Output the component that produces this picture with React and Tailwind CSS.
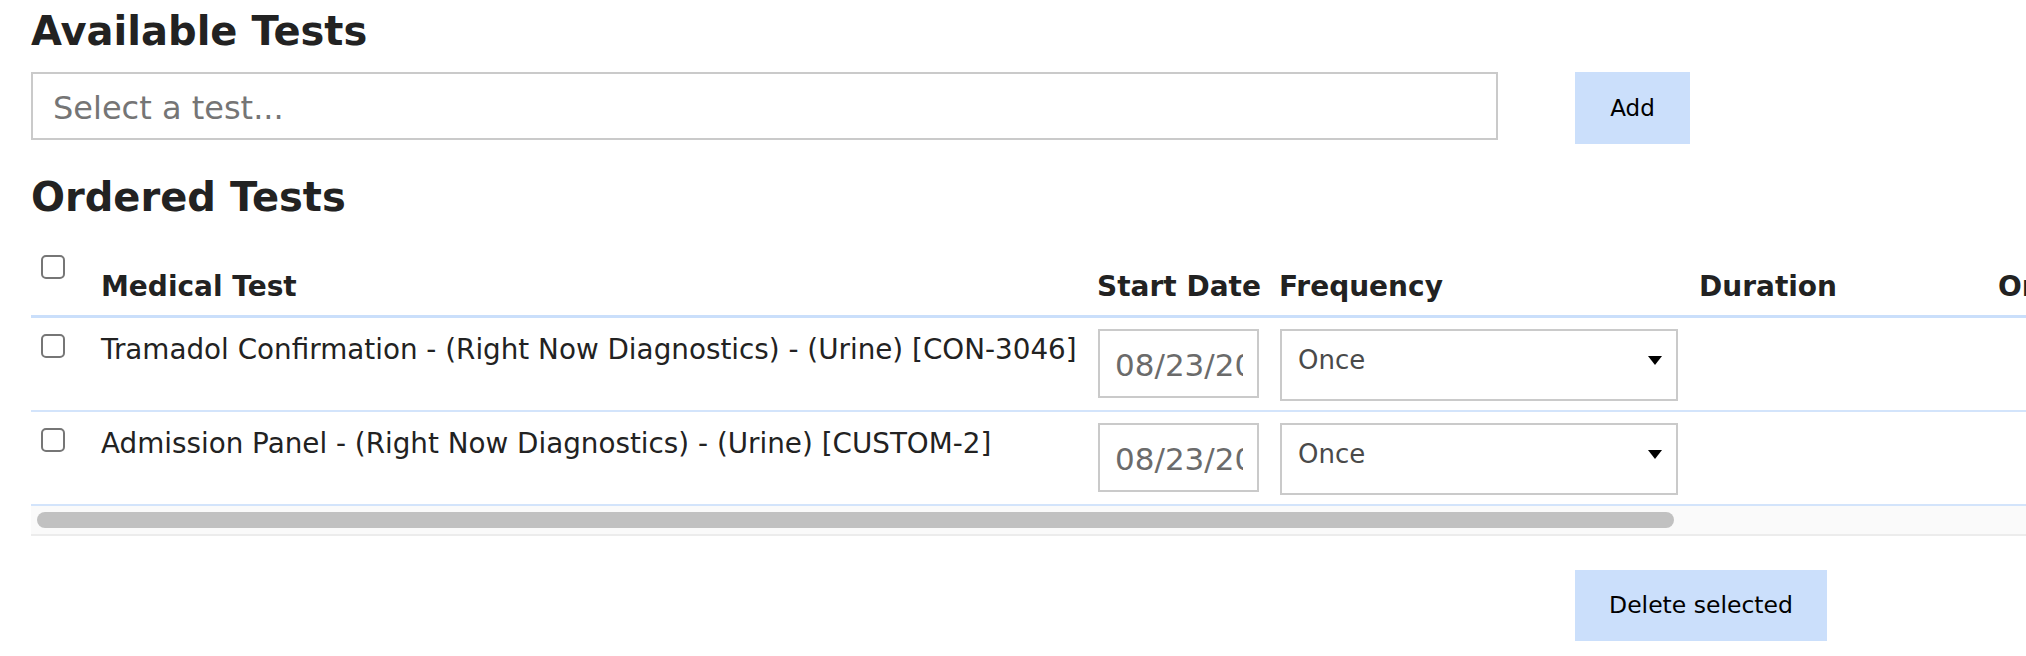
import React, { useState } from 'react';

const ROWS = [
  { id: 1, name: 'Tramadol Confirmation - (Right Now Diagnostics) - (Urine) [CON-3046]', start: '08/23/2024', frequency: 'Once' },
  { id: 2, name: 'Admission Panel - (Right Now Diagnostics) - (Urine) [CUSTOM-2]', start: '08/23/2024', frequency: 'Once' },
];

const COLS = 'grid grid-cols-[61px_996px_182px_420px_299px_300px]';

function Checkbox({ checked, onChange }) {
  return (
    <input type="checkbox" checked={checked} onChange={onChange}
      className="appearance-none w-6 h-6 rounded-[5px] border-2 border-[#767676] bg-white checked:bg-[#2563eb] checked:border-[#2563eb] block"/>
  );
}

function FakeSelect({ value }) {
  return (
    <div className="w-[398px] h-[72px] border-2 border-[#cacaca] bg-white flex justify-between items-start pl-[16px] pr-[14px] pt-[14px]">
      <span className="text-[26px] leading-[31px] text-[#4a4a4a]">{value}</span>
      <svg width="14" height="9" viewBox="0 0 14 9" className="mt-[11px]">
        <path d="M0 0 L14 0 L7 9 Z" fill="#000"/>
      </svg>
    </div>
  );
}

export default function App() {
  const [selected, setSelected] = useState({});
  const allChecked = ROWS.every(r => selected[r.id]);

  const toggleAll = () => {
    const next = {};
    ROWS.forEach(r => { next[r.id] = !allChecked; });
    setSelected(next);
  };

  return (
    <div className="w-full min-h-[656px] overflow-hidden bg-white text-[#222] font-['DejaVu_Sans',Verdana,sans-serif]">
      <div className="pl-[31px]">
        {/* Available */}
        <h2 className="mt-[8px] text-[40px] leading-[47px] font-bold">Available Tests</h2>
        <div className="mt-[17px] flex items-start gap-[77px]">
          <input type="text" placeholder="Select a test..."
            className="w-[1467px] h-[68px] border-2 border-[#cacaca] pl-[20px] pt-[3px] text-[32px] text-[#222] placeholder:text-[#757575] outline-none"/>
          <button className="w-[115px] h-[72px] bg-[#cbdffb] text-[23px] text-black">Add</button>
        </div>

        {/* Ordered */}
        <h2 className="mt-[30px] text-[40px] leading-[47px] font-bold">Ordered Tests</h2>

        <div className="overflow-hidden">
          <div className="w-[2258px]">
            <div className={`${COLS} h-[97px] border-b-[3px] border-[#cadffb]`}>
              <div className="pl-[10px] pt-[34px]">
                <Checkbox checked={allChecked} onChange={toggleAll}/>
              </div>
              {['Medical Test', 'Start Date', 'Frequency', 'Duration', 'Ordering Provider'].map(h => (
                <div key={h} className="pl-[9px] pb-[12px] flex items-end whitespace-nowrap text-[28px] leading-[32px] font-bold">
                  {h}
                </div>
              ))}
            </div>

            {ROWS.map(row => (
              <div key={row.id} className={`${COLS} h-[94px] border-b-2 border-[#d3e4fb]`}>
                <div className="pl-[10px] pt-[16px]">
                  <Checkbox checked={!!selected[row.id]}
                    onChange={() => setSelected(s => ({ ...s, [row.id]: !s[row.id] }))}/>
                </div>
                <div className="pl-[9px] pt-[15px] whitespace-nowrap text-[27.8px] leading-[34px]">{row.name}</div>
                <div className="pl-[10px] pt-[11px]">
                  <input type="text" readOnly value={row.start}
                    className="w-[161px] h-[69px] border-2 border-[#cacaca] pl-[15px] pr-[14px] pt-[2px] text-[31px] text-[#6b6b6b] outline-none"/>
                </div>
                <div className="pl-[10px] pt-[11px]">
                  <FakeSelect value={row.frequency}/>
                </div>
                <div/>
                <div/>
              </div>
            ))}
          </div>

          {/* scrollbar */}
          <div className="h-[30px] bg-[#fafafa] border-b-2 border-[#ececec] flex items-center pl-[6px]">
            <div className="w-[1637px] h-[16px] rounded-full bg-[#c1c1c1]"/>
          </div>
        </div>

        <button className="mt-[34px] ml-[1544px] w-[252px] h-[71px] bg-[#cbdffb] text-[23.5px] text-black">
          Delete selected
        </button>
      </div>
    </div>
  );
}
